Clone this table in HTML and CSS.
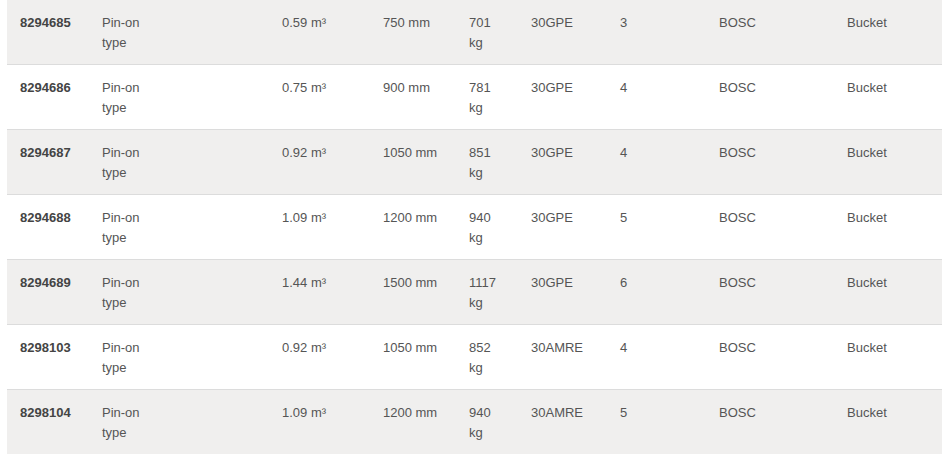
FILE: index.html
```html
<!DOCTYPE html>
<html>
<head>
<meta charset="utf-8">
<link rel="stylesheet" href="styles.css">
</head>
<body>
<table class="parts">
  <colgroup>
    <col class="c1"><col class="c2"><col class="c3"><col class="c4"><col class="c5"><col class="c6"><col class="c7"><col class="c8"><col class="c9">
  </colgroup>
  <tbody>
    <tr class="alt"><td class="num">8294685</td><td class="wrap">Pin-on type</td><td>0.59 m³</td><td>750 mm</td><td class="kg">701 kg</td><td>30GPE</td><td>3</td><td>BOSC</td><td>Bucket</td></tr>
    <tr><td class="num">8294686</td><td class="wrap">Pin-on type</td><td>0.75 m³</td><td>900 mm</td><td class="kg">781 kg</td><td>30GPE</td><td>4</td><td>BOSC</td><td>Bucket</td></tr>
    <tr class="alt"><td class="num">8294687</td><td class="wrap">Pin-on type</td><td>0.92 m³</td><td>1050 mm</td><td class="kg">851 kg</td><td>30GPE</td><td>4</td><td>BOSC</td><td>Bucket</td></tr>
    <tr><td class="num">8294688</td><td class="wrap">Pin-on type</td><td>1.09 m³</td><td>1200 mm</td><td class="kg">940 kg</td><td>30GPE</td><td>5</td><td>BOSC</td><td>Bucket</td></tr>
    <tr class="alt"><td class="num">8294689</td><td class="wrap">Pin-on type</td><td>1.44 m³</td><td>1500 mm</td><td class="kg">1117 kg</td><td>30GPE</td><td>6</td><td>BOSC</td><td>Bucket</td></tr>
    <tr><td class="num">8298103</td><td class="wrap">Pin-on type</td><td>0.92 m³</td><td>1050 mm</td><td class="kg">852 kg</td><td>30AMRE</td><td>4</td><td>BOSC</td><td>Bucket</td></tr>
    <tr class="alt last"><td class="num">8298104</td><td class="wrap">Pin-on type</td><td>1.09 m³</td><td>1200 mm</td><td class="kg">940 kg</td><td>30AMRE</td><td>5</td><td>BOSC</td><td>Bucket</td></tr>
  </tbody>
</table>
</body>
</html>
```
FILE: styles.css
```css
html, body {
  margin: 0;
  padding: 0;
  background: #ffffff;
}
body {
  padding: 0 7px;
  font-family: "Liberation Sans", Arial, sans-serif;
  font-size: 13px;
  color: #555555;
}
.parts {
  width: 935px;
  border-collapse: collapse;
  table-layout: fixed;
}
.c1 { width: 82px; }
.c2 { width: 180px; }
.c3 { width: 101px; }
.c4 { width: 86px; }
.c5 { width: 62px; }
.c6 { width: 89px; }
.c7 { width: 99px; }
.c8 { width: 128px; }
.c9 { width: 108px; }
.parts td {
  padding: 13px 4px 11px 13px;
  height: 40px;
  line-height: 20px;
  vertical-align: top;
  box-sizing: content-box;
}
.parts tr {
  border-bottom: 1px solid #dcdcdc;
}
.parts tr.last {
  border-bottom: 0;
}
.parts tr.alt {
  background: #f0efee;
}
.parts td.num {
  font-weight: bold;
  color: #444444;
}
.parts td.wrap {
  padding-right: 115px;
}
.parts td.kg {
  padding-right: 17px;
}
```
